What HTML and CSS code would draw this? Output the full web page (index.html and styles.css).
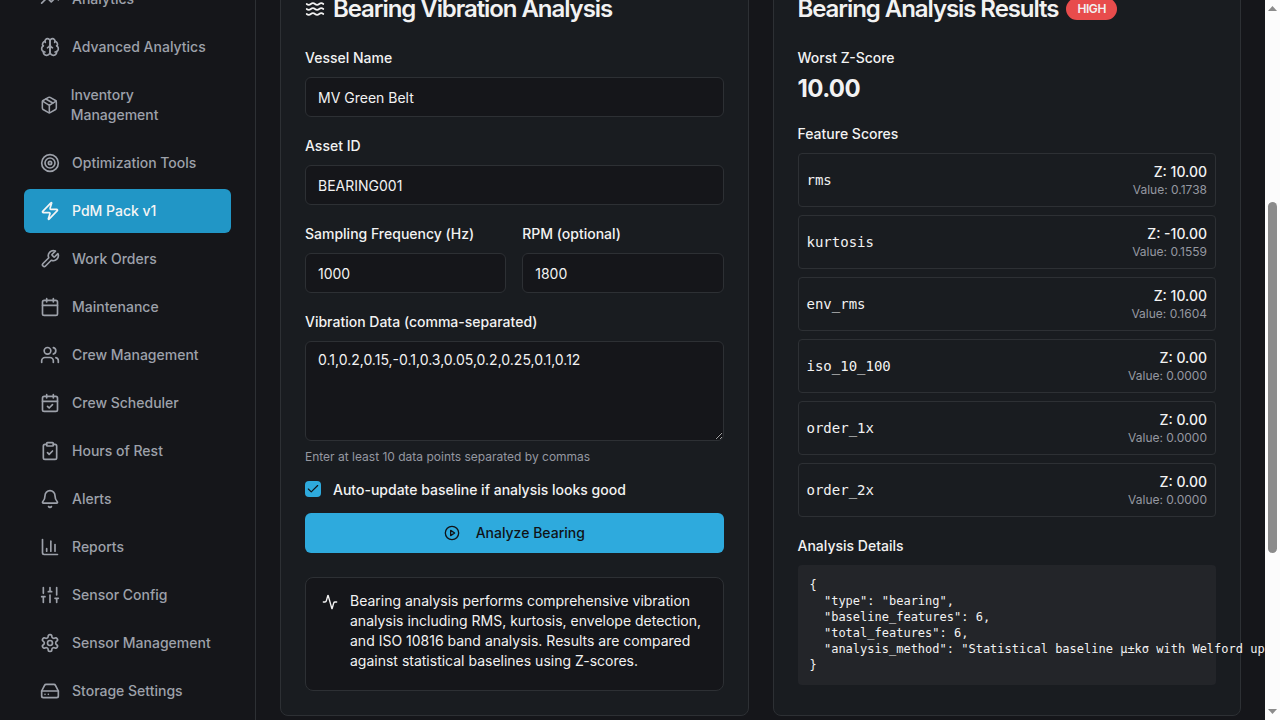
FILE: index.html
```html
<!DOCTYPE html>
<html lang="en">
<head>
<meta charset="utf-8">
<title>PdM Pack v1</title>
<link rel="stylesheet" href="styles.css">
</head>
<body>
<div class="app">
  <aside class="sidebar">
    <nav class="nav">
      <a class="nav-item"><svg class="icon" viewBox="0 0 24 24"><path d="M16 7h6v6"/><path d="m22 7-8.5 8.5-5-5L2 17"/></svg><span>Analytics</span></a>
      <a class="nav-item"><svg class="icon" viewBox="0 0 24 24"><path d="M12 5a3 3 0 1 0-5.997.125 4 4 0 0 0-2.526 5.77 4 4 0 0 0 .556 6.588A4 4 0 1 0 12 18Z"/><path d="M12 5a3 3 0 1 1 5.997.125 4 4 0 0 1 2.526 5.77 4 4 0 0 1-.556 6.588A4 4 0 1 1 12 18Z"/><path d="M15 13a4.500 4.500 0 0 1-3-4 4.500 4.500 0 0 1-3 4"/><path d="M17.599 6.500a3 3 0 0 0 .399-1.375"/><path d="M6.003 5.125A3 3 0 0 0 6.401 6.500"/><path d="M3.477 10.896a4 4 0 0 1 .585-.396"/><path d="M19.938 10.500a4 4 0 0 1 .585.396"/><path d="M6 18a4 4 0 0 1-1.967-.516"/><path d="M19.967 17.484A4 4 0 0 1 18 18"/></svg><span>Advanced Analytics</span></a>
      <a class="nav-item"><svg class="icon" viewBox="0 0 24 24"><path d="M11 21.730a2 2 0 0 0 2 0l7-4A2 2 0 0 0 21 16V8a2 2 0 0 0-1-1.730l-7-4a2 2 0 0 0-2 0l-7 4A2 2 0 0 0 3 8v8a2 2 0 0 0 1 1.730z"/><path d="M12 22V12"/><path d="m3.300 7 7.703 4.734a2 2 0 0 0 1.994 0L20.700 7"/><path d="m7.500 4.270 9 5.150"/></svg><span>Inventory Management</span></a>
      <a class="nav-item"><svg class="icon" viewBox="0 0 24 24"><circle cx="12" cy="12" r="10"/><circle cx="12" cy="12" r="6"/><circle cx="12" cy="12" r="2"/></svg><span>Optimization Tools</span></a>
      <a class="nav-item active"><svg class="icon" viewBox="0 0 24 24"><path d="M4 14a1 1 0 0 1-.780-1.630l9.900-10.200a.5.5 0 0 1 .860.460l-1.920 6.020A1 1 0 0 0 13 10h7a1 1 0 0 1 .780 1.630l-9.900 10.200a.5.5 0 0 1-.860-.460l1.920-6.020A1 1 0 0 0 11 14z"/></svg><span>PdM Pack v1</span></a>
      <a class="nav-item"><svg class="icon" viewBox="0 0 24 24"><path d="M14.700 6.300a1 1 0 0 0 0 1.400l1.600 1.600a1 1 0 0 0 1.400 0l3.770-3.770a6 6 0 0 1-7.940 7.940l-6.910 6.910a2.120 2.120 0 0 1-3-3l6.910-6.910a6 6 0 0 1 7.940-7.940l-3.760 3.760z"/></svg><span>Work Orders</span></a>
      <a class="nav-item"><svg class="icon" viewBox="0 0 24 24"><path d="M8 2v4"/><path d="M16 2v4"/><rect width="18" height="18" x="3" y="4" rx="2"/><path d="M3 10h18"/></svg><span>Maintenance</span></a>
      <a class="nav-item"><svg class="icon" viewBox="0 0 24 24"><path d="M16 21v-2a4 4 0 0 0-4-4H6a4 4 0 0 0-4 4v2"/><circle cx="9" cy="7" r="4"/><path d="M22 21v-2a4 4 0 0 0-3-3.870"/><path d="M16 3.130a4 4 0 0 1 0 7.750"/></svg><span>Crew Management</span></a>
      <a class="nav-item"><svg class="icon" viewBox="0 0 24 24"><path d="M8 2v4"/><path d="M16 2v4"/><rect width="18" height="18" x="3" y="4" rx="2"/><path d="M3 10h18"/><path d="m9 16 2 2 4-4"/></svg><span>Crew Scheduler</span></a>
      <a class="nav-item"><svg class="icon" viewBox="0 0 24 24"><rect width="8" height="4" x="8" y="2" rx="1"/><path d="M16 4h2a2 2 0 0 1 2 2v14a2 2 0 0 1-2 2H6a2 2 0 0 1-2-2V6a2 2 0 0 1 2-2h2"/><path d="m9 14 2 2 4-4"/></svg><span>Hours of Rest</span></a>
      <a class="nav-item"><svg class="icon" viewBox="0 0 24 24"><path d="M10.268 21a2 2 0 0 0 3.464 0"/><path d="M3.262 15.326A1 1 0 0 0 4 17h16a1 1 0 0 0 .740-1.673C19.410 13.956 18 12.499 18 8A6 6 0 0 0 6 8c0 4.499-1.411 5.956-2.738 7.326"/></svg><span>Alerts</span></a>
      <a class="nav-item"><svg class="icon" viewBox="0 0 24 24"><path d="M3 3v16a2 2 0 0 0 2 2h16"/><path d="M18 17V9"/><path d="M13 17V5"/><path d="M8 17v-3"/></svg><span>Reports</span></a>
      <a class="nav-item"><svg class="icon" viewBox="0 0 24 24"><path d="M4 21v-7M4 10V3M12 21v-9M12 8V3M20 21v-5M20 12V3M2 14h4M10 8h4M18 16h4"/></svg><span>Sensor Config</span></a>
      <a class="nav-item"><svg class="icon" viewBox="0 0 24 24"><path d="M12.220 2h-.440a2 2 0 0 0-2 2v.180a2 2 0 0 1-1 1.730l-.430.250a2 2 0 0 1-2 0l-.150-.080a2 2 0 0 0-2.730.730l-.220.380a2 2 0 0 0 .730 2.730l.150.100a2 2 0 0 1 1 1.720v.510a2 2 0 0 1-1 1.740l-.150.090a2 2 0 0 0-.730 2.730l.220.380a2 2 0 0 0 2.730.730l.150-.080a2 2 0 0 1 2 0l.430.250a2 2 0 0 1 1 1.730V20a2 2 0 0 0 2 2h.440a2 2 0 0 0 2-2v-.180a2 2 0 0 1 1-1.730l.430-.250a2 2 0 0 1 2 0l.150.080a2 2 0 0 0 2.730-.730l.220-.390a2 2 0 0 0-.730-2.730l-.150-.080a2 2 0 0 1-1-1.740v-.500a2 2 0 0 1 1-1.740l.150-.090a2 2 0 0 0 .730-2.730l-.220-.380a2 2 0 0 0-2.730-.730l-.150.080a2 2 0 0 1-2 0l-.430-.250a2 2 0 0 1-1-1.730V4a2 2 0 0 0-2-2z"/><circle cx="12" cy="12" r="3"/></svg><span>Sensor Management</span></a>
      <a class="nav-item"><svg class="icon" viewBox="0 0 24 24"><path d="M22 12H2"/><path d="M5.450 5.110 2 12v6a2 2 0 0 0 2 2h16a2 2 0 0 0 2-2v-6l-3.450-6.890A2 2 0 0 0 16.760 4H7.240a2 2 0 0 0-1.790 1.110z"/><path d="M6 16h.01M10 16h.01"/></svg><span>Storage Settings</span></a>
    </nav>
  </aside>

  <main class="main">
    <section class="card">
      <h2 class="card-title"><svg class="icon" viewBox="0 0 24 24"><path d="M2 6c.6.5 1.200 1 2.500 1C7 7 7 5 9.500 5c2.600 0 2.400 2 5 2 2.500 0 2.500-2 5-2 1.300 0 1.900.5 2.500 1"/><path d="M2 12c.6.5 1.200 1 2.500 1 2.500 0 2.500-2 5-2 2.600 0 2.400 2 5 2 2.500 0 2.500-2 5-2 1.300 0 1.900.5 2.500 1"/><path d="M2 18c.6.5 1.200 1 2.500 1 2.500 0 2.500-2 5-2 2.600 0 2.400 2 5 2 2.500 0 2.500-2 5-2 1.300 0 1.900.5 2.500 1"/></svg>Bearing Vibration Analysis</h2>
      <form class="form">
        <div><label class="label" for="vessel">Vessel Name</label><input class="input" id="vessel" value="MV Green Belt"></div>
        <div><label class="label" for="asset">Asset ID</label><input class="input" id="asset" value="BEARING001"></div>
        <div class="pair">
          <div><label class="label" for="freq">Sampling Frequency (Hz)</label><input class="input" id="freq" value="1000"></div>
          <div><label class="label" for="rpm">RPM (optional)</label><input class="input" id="rpm" value="1800"></div>
        </div>
        <div>
          <label class="label" for="data">Vibration Data (comma-separated)</label>
          <textarea class="input area" id="data" spellcheck="false">0.1,0.2,0.15,-0.1,0.3,0.05,0.2,0.25,0.1,0.12</textarea>
          <p class="hint">Enter at least 10 data points separated by commas</p>
        </div>
        <div class="check-row">
          <span class="checkbox"><svg class="icon tick" viewBox="0 0 24 24"><path d="M20 6 9 17l-5-5"/></svg></span>
          <span class="label check-label">Auto-update baseline if analysis looks good</span>
        </div>
        <button class="button" type="button"><svg class="icon small" viewBox="0 0 24 24"><circle cx="12" cy="12" r="10"/><path d="m10 8 6 4-6 4z"/></svg>Analyze Bearing</button>
      </form>
      <div class="alert">
        <svg class="icon small" viewBox="0 0 24 24"><path d="M22 12h-2.480a2 2 0 0 0-1.930 1.460l-2.350 8.360a.25.25 0 0 1-.480 0L9.240 2.180a.25.25 0 0 0-.480 0l-2.350 8.360A2 2 0 0 1 4.490 12H2"/></svg>
        <p class="alert-text">Bearing analysis performs comprehensive vibration analysis including RMS, kurtosis, envelope detection, and ISO 10816 band analysis. Results are compared against statistical baselines using Z-scores.</p>
      </div>
    </section>

    <section class="card">
      <h2 class="card-title">Bearing Analysis Results<span class="badge">HIGH</span></h2>
      <div class="results">
        <div><span class="label">Worst Z-Score</span><div class="score">10.00</div></div>
        <div>
          <span class="label">Feature Scores</span>
          <div class="features">
            <div class="feature"><span class="name">rms</span><div class="values"><b class="z">Z: 10.00</b><span class="raw">Value: 0.1738</span></div></div>
            <div class="feature"><span class="name">kurtosis</span><div class="values"><b class="z">Z: -10.00</b><span class="raw">Value: 0.1559</span></div></div>
            <div class="feature"><span class="name">env_rms</span><div class="values"><b class="z">Z: 10.00</b><span class="raw">Value: 0.1604</span></div></div>
            <div class="feature"><span class="name">iso_10_100</span><div class="values"><b class="z">Z: 0.00</b><span class="raw">Value: 0.0000</span></div></div>
            <div class="feature"><span class="name">order_1x</span><div class="values"><b class="z">Z: 0.00</b><span class="raw">Value: 0.0000</span></div></div>
            <div class="feature"><span class="name">order_2x</span><div class="values"><b class="z">Z: 0.00</b><span class="raw">Value: 0.0000</span></div></div>
          </div>
        </div>
        <div>
          <span class="label">Analysis Details</span>
          <pre class="details">{
  "type": "bearing",
  "baseline_features": 6,
  "total_features": 6,
  "analysis_method": "Statistical baseline µ±kσ with Welford updates"
}</pre>
        </div>
      </div>
    </section>
  </main>

  <div class="scrollbar">
    <svg class="arrow" viewBox="0 0 15 15"><path d="M3 11h9L7.500 6z"/></svg>
    <div class="thumb"></div>
    <svg class="arrow" viewBox="0 0 15 15"><path d="M3 4h9L7.500 9z"/></svg>
  </div>
</div>
</body>
</html>
```

FILE: styles.css
```css
:root {
  --bg: #15161a;
  --side: #15161a;
  --card: #191c20;
  --line: #2d3034;
  --text: #f2f2f2;
  --muted: #9598a0;
  --primary: #2eaadd;
}

*, *::before, *::after { box-sizing: border-box; }

body {
  margin: 0;
  background: var(--bg);
  color: var(--text);
  font: 16px/24px Inter, sans-serif;
}

h2, p, pre { margin: 0; }

.app {
  display: grid;
  grid-template-columns: 256px minmax(0, 1fr) 15px;
  height: 720px;
  overflow: hidden;
}

.icon {
  width: 20px;
  height: 20px;
  fill: none;
  stroke: currentColor;
  stroke-width: 2;
  stroke-linecap: round;
  stroke-linejoin: round;
}

.icon.small { width: 16px; height: 16px; }

.sidebar {
  height: 720px;
  overflow: hidden;
  background: var(--side);
  border-right: 1px solid var(--line);
}

.nav {
  display: flex;
  flex-direction: column;
  gap: 4px;
  margin-top: -23px;
  padding: 0 24px;
}

.nav-item {
  display: flex;
  align-items: center;
  gap: 12px;
  padding: 12px 16px;
  border-radius: 6px;
  color: #9da1aa;
  font-size: 14px;
  font-weight: 500;
  line-height: 20px;
}

.nav-item.active { background: #2196c6; color: #f5f5f5; }

.main {
  display: grid;
  grid-template-columns: 1fr 1fr;
  gap: 24px;
  align-items: stretch;
  height: 744px;
  margin-top: -28px;
  padding: 0 24px;
  min-width: 0;
}

.card {
  min-width: 0;
  padding: 24px;
  background: var(--card);
  border: 1px solid var(--line);
  border-radius: 8px;
}

.card-title {
  display: flex;
  align-items: center;
  gap: 8px;
  height: 24px;
  margin-bottom: 24px;
  font-size: 24px;
  font-weight: 600;
  line-height: 24px;
  letter-spacing: -1.07px;
}

.badge {
  padding: 2px 10px;
  border: 1px solid transparent;
  border-radius: 11px;
  background: #e84c4c;
  background-clip: border-box;
  font-size: 12px;
  line-height: 16px;
  letter-spacing: -0.4px;
}

.form, .results { display: flex; flex-direction: column; gap: 16px; }

.pair { display: grid; grid-template-columns: 1fr 1fr; gap: 16px; }

.label { font-size: 14px; font-weight: 500; line-height: 14px; }

.input {
  display: block;
  width: 100%;
  height: 40px;
  margin: 8px 0 0;
  padding: 8px 12px;
  background: var(--bg);
  border: 1px solid var(--line);
  border-radius: 6px;
  color: var(--text);
  font: 14px/20px Inter, sans-serif;
}

.area { height: 100px; resize: vertical; }

.hint { margin-top: 8px; color: var(--muted); font-size: 12px; line-height: 16px; }

.check-row { display: flex; align-items: center; gap: 12px; height: 16px; }

.check-label { padding-top: 2px; }

.checkbox {
  display: grid;
  place-items: center;
  width: 16px;
  height: 16px;
  border-radius: 4px;
  background: var(--primary);
  color: #101317;
}

.tick { width: 14px; height: 14px; }

.button {
  display: flex;
  align-items: center;
  justify-content: center;
  gap: 16px;
  height: 40px;
  padding: 0;
  border: 0;
  border-radius: 6px;
  background: var(--primary);
  color: #101317;
  font: 500 14px/20px Inter, sans-serif;
}

.alert {
  display: flex;
  gap: 12px;
  margin-top: 24px;
  padding: 16px;
  height: 114px;
  background: var(--bg);
  border: 1px solid var(--line);
  border-radius: 8px;
}

.alert .icon { flex: none; }

.alert-text { margin-top: -3px; font-size: 14px; line-height: 20px; }

.score {
  margin-top: 4px;
  font-size: 24px;
  font-weight: 700;
  line-height: 32px;
  letter-spacing: -0.6px;
}

.features { display: flex; flex-direction: column; gap: 8px; margin-top: 8px; }

.feature {
  display: flex;
  align-items: center;
  justify-content: space-between;
  padding: 8px;
  border: 1px solid var(--line);
  border-radius: 4px;
}

.name { font: 14px/20px "DejaVu Sans Mono", monospace; }

.values { display: flex; flex-direction: column; align-items: flex-end; }

.z { font-size: 14px; font-weight: 500; line-height: 20px; }

.raw { color: var(--muted); font-size: 12px; line-height: 16px; }

.details {
  margin-top: 8px;
  padding: 12px;
  border-radius: 4px;
  background: #232529;
  font: 12px/16px "DejaVu Sans Mono", monospace;
}

.scrollbar {
  position: relative;
  display: grid;
  grid-template-rows: 15px 690px 15px;
  background: #fcfcfc;
}

.arrow { width: 15px; height: 15px; fill: #8b8b8b; }

.thumb {
  width: 9px;
  height: 351px;
  margin: 187px 0 0 3px;
  border-radius: 5px;
  background: #8b8b8b;
}
```
